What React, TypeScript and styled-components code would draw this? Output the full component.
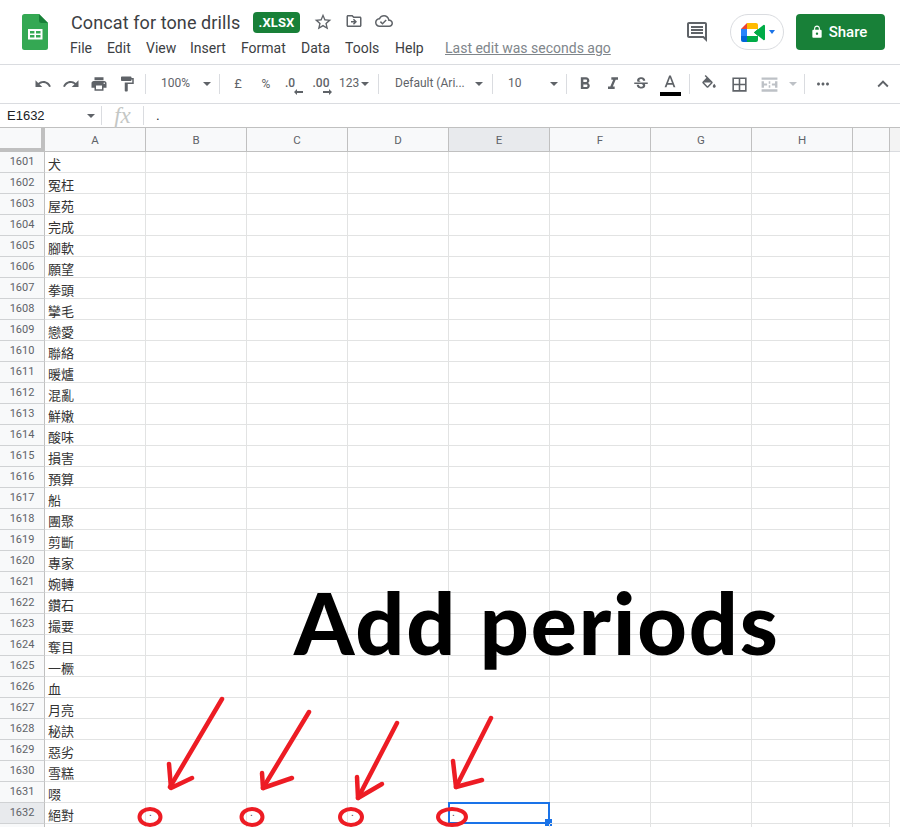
import React from "react";
import styled, { createGlobalStyle } from "styled-components";

const Global = createGlobalStyle`
  html, body { margin: 0; padding: 0; background: #fff; overflow: hidden; }
  #root { width: 900px; height: 827px; }
  * { box-sizing: border-box; }
`;

const Page = styled.div`
  position: relative;
  width: 900px;
  height: 827px;
  overflow: hidden;
  font-family: Roboto, "Liberation Sans", sans-serif;
  background: #fff;
`;

/* ---------- Title header ---------- */
const Header = styled.header`
  display: flex;
  align-items: flex-start;
  height: 65px;
  border-bottom: 1px solid #dadce0;
  padding: 14px 15px 0 22px;
`;
const LogoSvg = styled.svg`
  width: 26px;
  height: 36px;
  flex: none;
`;
const TitleColumn = styled.div`
  display: flex;
  flex-direction: column;
  margin-left: 23px;
  margin-top: -2px;
`;
const TitleRow = styled.div`
  display: flex;
  align-items: center;
  height: 21px;
`;
const DocTitle = styled.span`
  font-size: 18px;
  line-height: 21px;
  letter-spacing: 0.1px;
  color: #3c4043;
  width: 182px;
  white-space: nowrap;
`;
const Badge = styled.span`
  display: flex;
  align-items: center;
  justify-content: center;
  width: 47px;
  height: 21px;
  border-radius: 4px;
  background: #188038;
  color: #fff;
  font-size: 13px;
  font-weight: 700;
  letter-spacing: 0.1px;
`;
const TitleIcons = styled.div`
  display: flex;
  gap: 12px;
  margin-left: 13px;
  margin-top: -1px;
`;
const MenuRow = styled.nav`
  display: flex;
  align-items: center;
  height: 20px;
  margin-top: 5px;
  margin-left: -1px;
`;
const MenuItem = styled.span<{ $w: number }>`
  width: ${(p) => p.$w}px;
  font-size: 14px;
  line-height: 20px;
  color: #3c4043;
  flex: none;
`;
const LastEdit = styled.span`
  font-size: 14px;
  line-height: 20px;
  color: #80868b;
  text-decoration: underline;
  margin-left: 22px;
  white-space: nowrap;
`;
const HeaderRight = styled.div`
  display: flex;
  align-items: center;
  margin-left: auto;
  height: 36px;
`;
const CommentBtn = styled.span`
  display: flex;
  width: 24px;
  height: 24px;
  margin-right: 21px;
  margin-top: -1px;
`;
const MeetPill = styled.span`
  display: flex;
  align-items: center;
  width: 54px;
  height: 36px;
  border: 1px solid #dadce0;
  border-radius: 18px;
  padding-left: 10px;
  margin-right: 12px;
`;
const MeetCaret = styled.span`
  width: 0;
  height: 0;
  margin-left: 4px;
  border-left: 3.5px solid transparent;
  border-right: 3.5px solid transparent;
  border-top: 4px solid #1a73e8;
`;
const ShareBtn = styled.span`
  display: flex;
  align-items: center;
  justify-content: center;
  gap: 5px;
  width: 89px;
  height: 36px;
  padding-right: 4px;
  border-radius: 4px;
  background: #188038;
  color: #fff;
  font-size: 15px;
  font-weight: 500;
`;

/* ---------- Toolbar ---------- */
const Toolbar = styled.div`
  display: flex;
  align-items: center;
  height: 39px;
  border-bottom: 1px solid #dadce0;
  padding-left: 29px;
  padding-right: 3px;
`;
const ToolButton = styled.span<{ $w?: number; $muted?: boolean }>`
  display: flex;
  flex-direction: column;
  align-items: center;
  justify-content: center;
  flex: none;
  width: ${(p) => p.$w ?? 28}px;
  height: 24px;
  color: ${(p) => (p.$muted ? "#bdc1c6" : "#5f6368")};
`;
const PushRight = styled.span`
  margin-left: auto;
  display: flex;
`;
const ToolSep = styled.span`
  flex: none;
  width: 1px;
  height: 20px;
  margin: 0 4px;
  background: #dadce0;
`;
const DropBox = styled.span<{ $w: number; $pl: number; $pr?: number }>`
  display: flex;
  align-items: center;
  flex: none;
  width: ${(p) => p.$w}px;
  height: 24px;
  padding-left: ${(p) => p.$pl}px;
  padding-right: ${(p) => p.$pr ?? 4}px;
  font-size: 12px;
  color: #5f6368;
`;
const DropText = styled.span`
  white-space: nowrap;
  margin-top: -3px;
`;
const Caret = styled.span<{ $muted?: boolean; $auto?: boolean }>`
  flex: none;
  width: 0;
  height: 0;
  margin-left: ${(p) => (p.$auto ? "auto" : "2px")};
  border-left: 4px solid transparent;
  border-right: 4px solid transparent;
  border-top: 4px solid ${(p) => (p.$muted ? "#bdc1c6" : "#5f6368")};
`;
const SymbolText = styled.span<{ $size?: number }>`
  font-size: ${(p) => p.$size ?? 12}px;
  line-height: 14px;
  color: #5f6368;
`;
const DecimalLabel = styled.span<{ $shift: number }>`
  font-size: 12px;
  line-height: 12px;
  font-weight: 500;
  color: #5f6368;
  margin-top: 4px;
  margin-right: ${(p) => p.$shift}px;
`;
const DecimalArrow = styled.svg<{ $shift: number }>`
  width: 9px;
  height: 6px;
  flex: none;
  margin-left: ${(p) => p.$shift}px;
  fill: #5f6368;
`;
const ColorBar = styled.span`
  width: 21px;
  height: 4px;
  background: #000;
  margin-top: -1px;
`;

/* ---------- Formula bar ---------- */
const FormulaBar = styled.div`
  display: flex;
  align-items: center;
  height: 23px;
  font-size: 13px;
`;
const NameBox = styled.div`
  display: flex;
  align-items: center;
  width: 102px;
  height: 19px;
  padding: 0 6px 0 7px;
  border-right: 1px solid #dadce0;
  color: #202124;
  font-family: "Liberation Sans", Arial, sans-serif;
  font-size: 13px;
`;
const FxMark = styled.div`
  display: flex;
  align-items: center;
  justify-content: center;
  width: 42px;
  height: 19px;
  border-right: 1px solid #dadce0;
  font-family: "Liberation Serif", serif;
  font-style: italic;
  font-size: 23px;
  color: #c4c7c5;
`;
const FormulaValue = styled.div`
  padding-left: 12px;
  color: #202124;
  font-family: "Liberation Sans", Arial, sans-serif;
`;

/* ---------- Grid ---------- */
const SheetArea = styled.div`
  display: flex;
  border-top: 1px solid #c0c0c0;
`;
const Grid = styled.div`
  width: 890px;
  flex: none;
`;
const Gutter = styled.div`
  flex: 1;
  height: 24px;
  background: #f3f3f3;
  border-bottom: 1px solid #dadce0;
`;
const Row = styled.div`
  display: grid;
  grid-template-columns: 45px repeat(8, 101px) 37px;
  grid-template-rows: 21px;
  height: 21px;
`;
const HeaderRow = styled(Row)`
  grid-template-rows: 24px;
  height: 24px;
`;
const Corner = styled.div`
  background: #f8f9fa;
  border-right: 4px solid #c0c0c0;
  border-bottom: 4px solid #c0c0c0;
`;
const ColHead = styled.div<{ $active?: boolean }>`
  display: flex;
  align-items: center;
  justify-content: center;
  font-size: 11.5px;
  color: #5f6368;
  background: ${(p) => (p.$active ? "#e8eaed" : "#f8f9fa")};
  border-right: 1px solid #c0c0c0;
  border-bottom: 1px solid #c0c0c0;
`;
const RowHead = styled.div<{ $active?: boolean }>`
  display: flex;
  align-items: center;
  justify-content: center;
  padding-bottom: 2px;
  font-size: 11px;
  color: #5f6368;
  background: ${(p) => (p.$active ? "#e8eaed" : "#f8f9fa")};
  border-right: 1px solid #c0c0c0;
  border-bottom: 1px solid #d0d2d4;
`;
const Cell = styled.div`
  position: relative;
  min-height: 0;
  border-right: 1px solid #e2e3e3;
  border-bottom: 1px solid #e2e3e3;
  padding-left: 3px;
  font-family: "Noto Sans CJK TC", "Liberation Sans", sans-serif;
  font-size: 13px;
  line-height: 23px;
  color: #333;
  white-space: nowrap;
`;
const Dot = styled.span`
  font-family: "Liberation Sans", Arial, sans-serif;
  font-size: 10px;
  line-height: 20px;
  color: #444;
  display: block;
`;
const Selection = styled.div`
  position: absolute;
  top: -1px;
  left: -1px;
  right: -1px;
  bottom: -1px;
  border: 2px solid #1a73e8;
  pointer-events: none;
`;
const Handle = styled.div`
  position: absolute;
  right: -4px;
  bottom: -4px;
  width: 7px;
  height: 7px;
  background: #1a73e8;
`;

/* ---------- Annotations drawn over the sheet ---------- */
const Overlay = styled.svg`
  position: absolute;
  left: 0;
  top: 0;
  width: 900px;
  height: 827px;
  pointer-events: none;
`;
const BigNote = styled.div`
  position: absolute;
  left: 294px;
  top: 569px;
  font-family: Lato, "Open Sans", sans-serif;
  font-weight: 900;
  font-size: 86px;
  line-height: 106px;
  letter-spacing: 1.9px;
  color: #000;
  white-space: nowrap;
`;

/* ---------- Icon ---------- */
const Icon: React.FC<{ d: string; size?: number; color?: string }> = ({ d, size = 18, color = "currentColor" }) => (
  <svg width={size} height={size} viewBox="0 0 24 24" fill={color}>
    <path d={d} />
  </svg>
);

const P = {
  undo: "M12.5 8c-2.65 0-5.05.99-6.9 2.6L2 7v9h9l-3.62-3.62c1.39-1.16 3.16-1.88 5.12-1.88 3.54 0 6.55 2.31 7.6 5.5l2.37-.78C21.08 11.03 17.15 8 12.5 8z",
  redo: "M18.4 10.6C16.55 8.99 14.15 8 11.5 8c-4.65 0-8.58 3.03-9.96 7.22L3.9 16c1.05-3.19 4.05-5.5 7.6-5.5 1.95 0 3.73.72 5.12 1.88L13 16h9V7l-3.6 3.6z",
  print: "M19 8H5c-1.66 0-3 1.34-3 3v6h4v4h12v-4h4v-6c0-1.66-1.34-3-3-3zm-3 11H8v-5h8v5zm3-7c-.55 0-1-.45-1-1s.45-1 1-1 1 .45 1 1-.45 1-1 1zm-1-9H6v4h12V3z",
  paint: "M18 4V3c0-.55-.45-1-1-1H5c-.55 0-1 .45-1 1v4c0 .55.45 1 1 1h12c.55 0 1-.45 1-1V6h1v4H9v11c0 .55.45 1 1 1h2c.55 0 1-.45 1-1v-9h8V4h-3z",
  bold: "M15.6 10.79c.97-.67 1.65-1.77 1.65-2.79 0-2.26-1.75-4-4-4H7v14h7.04c2.09 0 3.71-1.7 3.71-3.79 0-1.52-.86-2.82-2.15-3.42zM10 6.5h3c.83 0 1.5.67 1.5 1.5s-.67 1.5-1.5 1.5h-3v-3zm3.5 9H10v-3h3.5c.83 0 1.5.67 1.5 1.5s-.67 1.5-1.5 1.5z",
  italic: "M10 4v3h2.21l-3.42 8H6v3h8v-3h-2.21l3.42-8H18V4z",
  strike: "M7.24 8.75c-.26-.48-.39-1.03-.39-1.67 0-.61.13-1.16.4-1.67.26-.5.63-.93 1.11-1.29.48-.35 1.05-.63 1.7-.83.66-.19 1.39-.29 2.18-.29.81 0 1.54.11 2.21.34.66.22 1.23.54 1.69.94.47.4.83.88 1.08 1.43.25.55.38 1.15.38 1.81h-3.01c0-.31-.05-.59-.15-.85-.09-.27-.24-.49-.44-.68-.2-.19-.45-.33-.75-.44-.3-.1-.66-.16-1.06-.16-.39 0-.74.04-1.03.13-.29.09-.53.21-.72.36-.19.16-.34.34-.44.55-.1.21-.15.43-.15.66 0 .48.25.88.74 1.21.38.25.77.48 1.41.7H7.39c-.05-.08-.11-.17-.15-.25zM21 12v-2H3v2h9.62c.18.07.4.14.55.2.37.17.66.34.87.51.21.17.35.36.43.57.07.2.11.43.11.69 0 .23-.05.45-.14.66-.09.2-.23.38-.42.53-.19.15-.42.26-.71.35-.29.08-.63.13-1.01.13-.43 0-.83-.04-1.18-.13s-.66-.23-.91-.42c-.25-.19-.45-.44-.59-.75-.14-.31-.25-.76-.25-1.21H6.4c0 .55.08 1.13.24 1.58.16.45.37.85.65 1.21.28.35.6.66.98.92.37.26.78.48 1.22.65.44.17.9.3 1.38.39.48.08.96.13 1.44.13.8 0 1.53-.09 2.18-.28s1.21-.45 1.67-.79c.46-.34.82-.77 1.07-1.27s.38-1.07.38-1.71c0-.6-.1-1.14-.31-1.61-.05-.11-.11-.23-.17-.33H21V12z",
  textA: "M11 3L5.5 17h2.25l1.12-3h6.25l1.12 3h2.25L13 3h-2zm-1.38 9L12 5.67 14.38 12H9.62z",
  fill: "M16.56 8.94L7.62 0 6.21 1.41l2.38 2.38-5.15 5.15c-.59.59-.59 1.54 0 2.12l5.5 5.5c.29.29.68.44 1.06.44s.77-.15 1.06-.44l5.5-5.5c.59-.58.59-1.53 0-2.12zM5.21 10h9.58L10 15zM19 11.5s-2 2.17-2 3.5c0 1.1.9 2 2 2s2-.9 2-2c0-1.33-2-3.5-2-3.5z",
  borders: "M3 3v18h18V3H3zm8 16H5v-6h6v6zm0-8H5V5h6v6zm8 8h-6v-6h6v6zm0-8h-6V5h6v6z",
  merge: "M2 3h20v3H2zM2 18h20v3H2zM2 8h3v3H2zM19 8h3v3h-3zM2 13h3v3H2zM19 13h3v3h-3zM2 10.8h7v2.4H2zM15 10.8h7v2.4h-7zM11 8h2v3h-2zM11 13h2v3h-2z",
  more: "M6 10c-1.1 0-2 .9-2 2s.9 2 2 2 2-.9 2-2-.9-2-2-2zm12 0c-1.1 0-2 .9-2 2s.9 2 2 2 2-.9 2-2-.9-2-2-2zm-6 0c-1.1 0-2 .9-2 2s.9 2 2 2 2-.9 2-2-.9-2-2-2z",
  less: "M12 8l-6 6 1.41 1.41L12 10.83l4.59 4.58L18 14z",
  comment: "M21.99 4c0-1.1-.89-2-1.99-2H4c-1.1 0-2 .9-2 2v12c0 1.1.9 2 2 2h14l4 4-.01-18zM20 4v13.17L18.83 16H4V4h16zM6 12h12v2H6zm0-3h12v2H6zm0-3h12v2H6z",
  lock: "M18 8h-1V6c0-2.76-2.24-5-5-5S7 3.24 7 6v2H6c-1.1 0-2 .9-2 2v10c0 1.1.9 2 2 2h12c1.1 0 2-.9 2-2V10c0-1.1-.9-2-2-2zm-6 9c-1.1 0-2-.9-2-2s.9-2 2-2 2 .9 2 2-.9 2-2 2zm3.1-9H8.9V6c0-1.71 1.39-3.1 3.1-3.1 1.71 0 3.1 1.39 3.1 3.1v2z",
  star: "M22 9.24l-7.19-.62L12 2 9.19 8.63 2 9.24l5.46 4.73L5.82 21 12 17.27 18.18 21l-1.63-7.03L22 9.24zM12 15.4l-3.76 2.27 1-4.28-3.32-2.88 4.38-.38L12 6.1l1.71 4.04 4.38.38-3.32 2.88 1 4.28L12 15.4z",
  move: "M20 6h-8l-2-2H4c-1.1 0-2 .9-2 2v12c0 1.1.9 2 2 2h16c1.1 0 2-.9 2-2V8c0-1.1-.9-2-2-2zm0 12H4V6h5.17l2 2H20v10zM12.16 12H8v2h4.16l-1.59 1.59L11.99 17 16 13l-4.01-4-1.42 1.41z",
  cloud: "M19.35 10.04C18.67 6.59 15.64 4 12 4 9.11 4 6.6 5.64 5.35 8.04 2.34 8.36 0 10.91 0 14c0 3.31 2.69 6 6 6h13c2.76 0 5-2.24 5-5 0-2.64-2.05-4.78-4.65-4.96zM19 18H6c-2.21 0-4-1.79-4-4 0-2.05 1.53-3.76 3.56-3.97l1.07-.11.5-.95C8.08 7.14 9.94 6 12 6c2.62 0 4.88 1.86 5.39 4.43l.3 1.5 1.53.11c1.56.1 2.78 1.41 2.78 2.96 0 1.65-1.35 3-3 3zM10 14.2l-2.1-2.1-1.4 1.4L10 17l5.6-5.6-1.4-1.4z",
};

const SheetsLogo = () => (
  <LogoSvg viewBox="0 0 26 36">
    <path d="M2.5 0H17l9 9v24.5a2.5 2.5 0 0 1-2.5 2.5h-21A2.5 2.5 0 0 1 0 33.5v-31A2.5 2.5 0 0 1 2.5 0z" fill="#34a853" />
    <path d="M17 0l9 9h-6.5A2.5 2.5 0 0 1 17 6.5z" fill="#188038" />
    <path d="M6 15h14.5v10.5H6z" fill="#fff" />
    <path d="M12.4 17v2.4H8V17zM18.5 17v2.4H14V17zM12.4 21v2.5H8V21zM18.5 21v2.5H14V21z" fill="#34a853" />
  </LogoSvg>
);

const MeetLogo = () => (
  <svg width="24" height="19" viewBox="0 0 24 19">
    <path d="M6 0L0 6h6z" fill="#ea4335" />
    <path d="M0 6h6v7H0z" fill="#2684fc" />
    <path d="M0 13h6v6H2a2 2 0 0 1-2-2z" fill="#0066da" />
    <path d="M6 0h9a2 2 0 0 1 2 2v4H6z" fill="#ffba00" />
    <path d="M6 13h11v4a2 2 0 0 1-2 2H6z" fill="#00ac47" />
    <path d="M17 6v7l-4-3.5z" fill="#00832d" />
    <path d="M13 9.5L22.4 2a1 1 0 0 1 1.6.8v13.4a1 1 0 0 1-1.6.8z" fill="#00ac47" />
  </svg>
);

const words = [
  "犬", "冤枉", "屋苑", "完成", "腳軟", "願望", "拳頭", "攣毛", "戀愛", "聯絡", "暖爐", "混亂", "鮮嫩", "酸味", "損害", "預算",
  "船", "團聚", "剪斷", "專家", "婉轉", "鑽石", "撮要", "奪目", "一橛", "血", "月亮", "秘訣", "惡劣", "雪糕", "啜", "絕對", "",
];
const cols = ["A", "B", "C", "D", "E", "F", "G", "H", ""];
const menus: [string, number][] = [
  ["File", 37], ["Edit", 39], ["View", 44], ["Insert", 51], ["Format", 60], ["Data", 44], ["Tools", 50], ["Help", 28],
];
const arrows = [
  { shaft: "222,699 170,787", head: "169,764 171,788 192,778" },
  { shaft: "309,712 263,788", head: "262,773 263,788 292,778" },
  { shaft: "397,723 358,798", head: "357,777 358,798 382,784" },
  { shaft: "491,718 456,787", head: "453,761 456,787 482,780" },
];
const rings = [
  { cx: 150, rx: 10.5 },
  { cx: 252, rx: 10.5 },
  { cx: 351, rx: 11 },
  { cx: 452, rx: 14 },
];

export default function App() {
  return (
    <Page>
      <Global />
      <Header>
        <SheetsLogo />
        <TitleColumn>
          <TitleRow>
            <DocTitle>Concat for tone drills</DocTitle>
            <Badge>.XLSX</Badge>
            <TitleIcons>
              <Icon d={P.star} size={20} color="#5f6368" />
              <Icon d={P.move} size={18} color="#5f6368" />
              <Icon d={P.cloud} size={18} color="#5f6368" />
            </TitleIcons>
          </TitleRow>
          <MenuRow>
            {menus.map(([m, w]) => (
              <MenuItem key={m} $w={w}>{m}</MenuItem>
            ))}
            <LastEdit>Last edit was seconds ago</LastEdit>
          </MenuRow>
        </TitleColumn>
        <HeaderRight>
          <CommentBtn><Icon d={P.comment} size={24} color="#5f6368" /></CommentBtn>
          <MeetPill>
            <MeetLogo />
            <MeetCaret />
          </MeetPill>
          <ShareBtn>
            <Icon d={P.lock} size={14} color="#fff" />
            Share
          </ShareBtn>
        </HeaderRight>
      </Header>

      <Toolbar>
        <ToolButton><Icon d={P.undo} /></ToolButton>
        <ToolButton><Icon d={P.redo} /></ToolButton>
        <ToolButton><Icon d={P.print} /></ToolButton>
        <ToolButton><Icon d={P.paint} /></ToolButton>
        <ToolSep />
        <DropBox $w={65} $pl={11}>
          <DropText>100%</DropText>
          <Caret $auto />
        </DropBox>
        <ToolSep />
        <ToolButton><SymbolText $size={13}>£</SymbolText></ToolButton>
        <ToolButton><SymbolText>%</SymbolText></ToolButton>
        <ToolButton>
          <DecimalLabel $shift={8}>.0</DecimalLabel>
          <DecimalArrow $shift={8} viewBox="0 0 9 6"><path d="M3 0v2h6v2H3v2L0 3z" /></DecimalArrow>
        </ToolButton>
        <ToolButton>
          <DecimalLabel $shift={2}>.00</DecimalLabel>
          <DecimalArrow $shift={10} viewBox="0 0 9 6"><path d="M6 0v2H0v2h6v2l3-3z" /></DecimalArrow>
        </ToolButton>
        <DropBox $w={38} $pl={3} $pr={0}>
          <DropText>123</DropText>
          <Caret />
        </DropBox>
        <ToolSep />
        <DropBox $w={105} $pl={12} $pr={5}>
          <DropText>Default (Ari...</DropText>
          <Caret $auto />
        </DropBox>
        <ToolSep />
        <DropBox $w={65} $pl={11}>
          <DropText>10</DropText>
          <Caret $auto />
        </DropBox>
        <ToolSep />
        <ToolButton><Icon d={P.bold} size={20} /></ToolButton>
        <ToolButton><Icon d={P.italic} size={20} /></ToolButton>
        <ToolButton><Icon d={P.strike} size={18} /></ToolButton>
        <ToolButton $w={30}>
          <Icon d={P.textA} size={20} />
          <ColorBar />
        </ToolButton>
        <ToolSep />
        <ToolButton $w={30}><Icon d={P.fill} size={18} /></ToolButton>
        <ToolButton $w={30}><Icon d={P.borders} size={19} /></ToolButton>
        <ToolButton $w={30} $muted><Icon d={P.merge} size={19} /></ToolButton>
        <ToolButton $w={16}><Caret $muted /></ToolButton>
        <ToolSep />
        <ToolButton><Icon d={P.more} size={18} /></ToolButton>
        <PushRight>
          <ToolButton><Icon d={P.less} size={22} /></ToolButton>
        </PushRight>
      </Toolbar>

      <FormulaBar>
        <NameBox>
          <span>E1632</span>
          <Caret $auto />
        </NameBox>
        <FxMark>fx</FxMark>
        <FormulaValue>.</FormulaValue>
      </FormulaBar>

      <SheetArea>
        <Grid>
          <HeaderRow>
            <Corner />
            {cols.map((c, i) => (
              <ColHead key={i} $active={c === "E"}>{c}</ColHead>
            ))}
          </HeaderRow>
          {words.map((w, i) => {
            const num = 1601 + i;
            const current = num === 1632;
            return (
              <Row key={num}>
                <RowHead $active={current}>{w ? num : ""}</RowHead>
                <Cell>{w}</Cell>
                {cols.slice(1).map((c, j) => (
                  <Cell key={j}>
                    {current && j < 4 && <Dot>.</Dot>}
                    {current && c === "E" && (
                      <Selection>
                        <Handle />
                      </Selection>
                    )}
                  </Cell>
                ))}
              </Row>
            );
          })}
        </Grid>
        <Gutter />
      </SheetArea>

      <BigNote>Add periods</BigNote>
      <Overlay viewBox="0 0 900 827">
        {arrows.map((a) => (
          <g key={a.shaft} fill="none" stroke="#ed1c24" strokeWidth="4.5" strokeLinecap="round" strokeLinejoin="round">
            <polyline points={a.shaft} />
            <polyline points={a.head} />
          </g>
        ))}
        {rings.map((r) => (
          <ellipse key={r.cx} cx={r.cx} cy={817} rx={r.rx} ry={8} fill="none" stroke="#ed1c24" strokeWidth="4" />
        ))}
      </Overlay>
    </Page>
  );
}
